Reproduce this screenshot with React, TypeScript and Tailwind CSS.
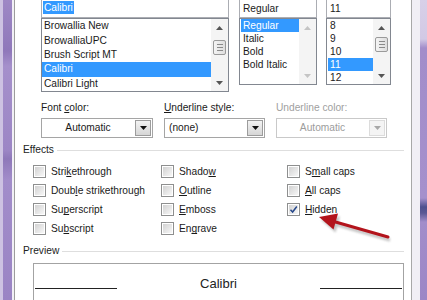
import React from "react"

const ui = "font-['Liberation_Sans',Arial,sans-serif] text-[10.2px] leading-[12px] text-[#1a1a1a] [text-decoration-skip-ink:none]"

function Tri({ up, color }: { up?: boolean; color: string }) {
  return (
    <svg width="7" height="4" viewBox="0 0 7 4">
      <path d={up ? "M0 4 L3.5 0 L7 4 Z" : "M0 0 L7 0 L3.5 4 Z"} fill={color} />
    </svg>
  )
}

function Thumb({ className }: { className: string }) {
  return (
    <div
      className={`mx-[2px] h-[15px] rounded-[2px] border border-[#9a9a9a] bg-linear-to-r from-[#f4f4f4] to-[#dedede] flex flex-col items-center justify-center gap-[2px] ${className}`}
    >
      <div className="w-[6px] h-px bg-[#8a8a8a]" />
      <div className="w-[6px] h-px bg-[#8a8a8a]" />
      <div className="w-[6px] h-px bg-[#8a8a8a]" />
    </div>
  )
}

function ScrollBar({ thumb, disabled }: { thumb?: string; disabled?: boolean }) {
  const c = disabled ? "#c4c4c4" : "#555"
  return (
    <div className="w-[17px] h-full bg-[#f4f4f4] flex flex-col">
      <div className="h-[17px] flex items-center justify-center">
        <Tri up color={c} />
      </div>
      <div className="flex-1">{thumb && <Thumb className={thumb} />}</div>
      <div className="h-[17px] flex items-center justify-center">
        <Tri color={c} />
      </div>
    </div>
  )
}

function ListRows({ items, selected, rowClass }: { items: string[]; selected: number; rowClass: string }) {
  return (
    <div className="flex-1 flex flex-col">
      {items.map((t, i) => (
        <div key={t} className={`${rowClass} flex items-center`}>
          <span
            className={`flex-1 h-full flex items-center pl-[2px] ${i === selected ? "bg-[#3399ff] text-white" : ""}`}
          >
            {t}
          </span>
        </div>
      ))}
    </div>
  )
}

function Combo({ text, disabled, center }: { text: string; disabled?: boolean; center?: boolean }) {
  return (
    <div className={`h-[20px] flex border ${disabled ? "border-[#c9c9c9]" : "border-[#a5a5a5]"} bg-white`}>
      <div
        className={`flex-1 flex items-center ${center ? "justify-center" : "pl-[4px]"} ${disabled ? "text-[#9c9c9c]" : ""}`}
      >
        {text}
      </div>
      <div
        className={`w-[16px] m-px flex items-center justify-center border ${
          disabled ? "border-[#dcdcdc] bg-[#f4f4f4]" : "border-[#9c9c9c] bg-linear-to-b from-[#f3f3f3] to-[#d6d6d6]"
        }`}
      >
        <Tri color={disabled ? "#a8a8a8" : "#111"} />
      </div>
    </div>
  )
}

function Check({ label, checked }: { label: React.ReactNode; checked?: boolean }) {
  return (
    <div className="h-[19px] flex items-center gap-[5px]">
      <span className="w-[13px] h-[13px] border border-[#8e8f8f] bg-white p-px shrink-0">
        <span className="w-full h-full flex items-center justify-center bg-linear-to-br from-[#d2d2d2] to-[#f7f7f7]">
          {checked && (
            <svg width="9" height="9" viewBox="0 0 9 9">
              <path d="M1.5 4.8 L3.6 7 L7.8 1.5" fill="none" stroke="#25478a" strokeWidth="1.5" />
            </svg>
          )}
        </span>
      </span>
      <span>{label}</span>
    </div>
  )
}

function GroupTitle({ title }: { title: string }) {
  return (
    <div className="h-[12px] flex items-center text-[#222]">
      <span>{title}</span>
      <div className="flex-1 ml-[3px] h-px bg-[#dedede]" />
    </div>
  )
}

export default function App() {
  return (
    <div className={`relative flex w-[427px] h-[300px] overflow-hidden bg-white ${ui}`}>
      {/* left window frame */}
      <div className="w-[3px] bg-[#cdc2e2]" />
      <div className="w-[9px] bg-[linear-gradient(to_bottom,#9e88c5_0%,#8f78ba_17%,#a590cb_22%,#9c86c5_50%,#8e78b9_53%,#a28dca_60%,#9a84c4_100%)]" />
      <div className="w-[2px] bg-[#f2f0f6]" />
      <div className="w-px bg-[#9c9c9c]" />

      {/* dialog body */}
      <div className="flex-1 flex flex-col pl-[8px] pr-[7px]">
        {/* font / style / size */}
        <div className="flex pl-[18px] h-[92px] items-start">
          <div className="w-[188px] flex flex-col">
            <div className="h-[18px] border-x border-b border-[#abadb3] pl-px pt-px">
              <span className="inline-block h-[13px] leading-[13px] px-px bg-[#3399ff] text-white">Calibri</span>
            </div>
            <div className="h-[74px] border border-[#828790] flex">
              <ListRows
                rowClass="h-[14.4px]"
                selected={3}
                items={["Browallia New", "BrowalliaUPC", "Brush Script MT", "Calibri", "Calibri Light"]}
              />
              <ScrollBar thumb="mt-[4px]" />
            </div>
          </div>

          <div className="w-[78px] ml-[10px] flex flex-col">
            <div className="h-[18px] border-x border-b border-[#abadb3] pl-[3px] flex items-center">Regular</div>
            <div className="h-[67px] border border-[#828790] flex">
              <div className="flex-1 pl-px">
                <ListRows rowClass="h-[13px]" selected={0} items={["Regular", "Italic", "Bold", "Bold Italic"]} />
              </div>
              <ScrollBar disabled />
            </div>
          </div>

          <div className="w-[65px] ml-[9px] flex flex-col">
            <div className="h-[18px] border-x border-b border-[#abadb3] pl-[3px] flex items-center">11</div>
            <div className="h-[67px] border border-[#828790] flex">
              <div className="flex-1 pl-px">
                <ListRows rowClass="h-[13px]" selected={3} items={["8", "9", "10", "11", "12"]} />
              </div>
              <ScrollBar thumb="mt-[1px]" />
            </div>
          </div>
        </div>

        {/* colour / underline */}
        <div className="flex pl-[18px] mt-[10px]">
          <div className="w-[112px] flex flex-col gap-[4px]">
            <div className="h-[12px]">
              Font <u>c</u>olor:
            </div>
            <Combo text="Automatic" center />
          </div>
          <div className="w-[101px] ml-[11px] flex flex-col gap-[4px]">
            <div className="h-[12px]">
              <u>U</u>nderline style:
            </div>
            <Combo text="(none)" />
          </div>
          <div className="w-[111px] ml-[11px] flex flex-col gap-[4px]">
            <div className="h-[12px] text-[#a0a0a0]">Underline color:</div>
            <Combo text="Automatic" center disabled />
          </div>
        </div>

        {/* effects */}
        <div className="mt-[6px]">
          <GroupTitle title="Effects" />
        </div>
        <div className="mt-[6px] pl-[10px] grid grid-cols-[128px_126px_1fr]">
          <div className="flex flex-col">
            <Check label={<>Stri<u>k</u>ethrough</>} />
            <Check label={<>Doub<u>l</u>e strikethrough</>} />
            <Check label={<>Su<u>p</u>erscript</>} />
            <Check label={<>Su<u>b</u>script</>} />
          </div>
          <div className="flex flex-col">
            <Check label={<>Shado<u>w</u></>} />
            <Check label={<><u>O</u>utline</>} />
            <Check label={<><u>E</u>mboss</>} />
            <Check label={<>En<u>g</u>rave</>} />
          </div>
          <div className="flex flex-col">
            <Check label={<>S<u>m</u>all caps</>} />
            <Check label={<><u>A</u>ll caps</>} />
            <Check label={<><u>H</u>idden</>} checked />
          </div>
        </div>

        {/* preview */}
        <div className="mt-[7px]">
          <GroupTitle title="Preview" />
        </div>
        <div className="mt-[6px] ml-[10px] flex-1 border-x border-t border-[#a3a3a3] px-px">
          <div className="mt-[12px] h-[16px] flex items-center justify-between">
            <div className="w-[82px] h-px bg-[#222] self-end mb-[3px]" />
            <span className="text-[13px] leading-[16px] text-[#222]">Calibri</span>
            <div className="w-[82px] h-px bg-[#222] self-end mb-[3px]" />
          </div>
        </div>
      </div>

      {/* right window frame */}
      <div className="w-px bg-[#a8a8a8]" />
      <div className="w-[8px] bg-[#f1eff5]" />
      <div className="w-[7px] bg-[linear-gradient(to_bottom,#d8d0e8_0%,#d2c9e5_13%,#a28dca_16%,#a590cc_66%,#4e4f8e_69%,#5b5894_71%,#a28dca_74%,#9c86c6_100%)]" />

      {/* red callout arrow */}
      <svg className="absolute inset-0 pointer-events-none" width="427" height="300" viewBox="0 0 427 300">
        <defs>
          <filter id="sh" x="-20%" y="-50%" width="140%" height="200%">
            <feGaussianBlur stdDeviation="1.2" />
          </filter>
        </defs>
        <g transform="translate(2 3)" opacity="0.35" filter="url(#sh)">
          <line x1="388" y1="237" x2="332" y2="221" stroke="#555" strokeWidth="3" />
          <path d="M319 217 L338 213.5 L333.5 229.5 Z" fill="#555" />
        </g>
        <line x1="388" y1="237" x2="332" y2="221" stroke="#b3141c" strokeWidth="3" strokeLinecap="round" />
        <path d="M319 217 L338 213.5 L333.5 229.5 Z" fill="#b3141c" />
      </svg>
    </div>
  )
}
